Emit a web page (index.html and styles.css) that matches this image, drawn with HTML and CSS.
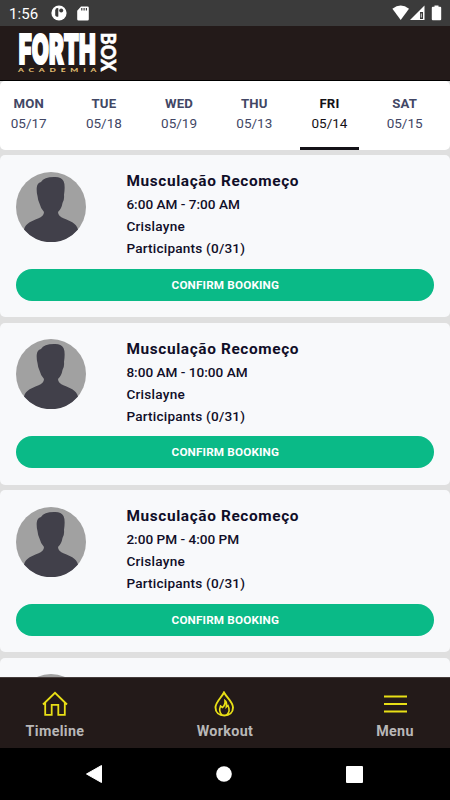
FILE: index.html
```html
<!DOCTYPE html>
<html lang="en">
<head>
<meta charset="utf-8">
<title>Forth Box</title>
<link rel="stylesheet" href="styles.css">
</head>
<body>
<div class="status">
  <span class="clock">1:56</span>
  <svg class="app" width="16" height="16" viewBox="0 0 16 16"><circle cx="8" cy="8" r="7.600" fill="#fff"/><path d="M7.300 3.200A2.600 2.600 0 0 0 4.200 5.500V10a2 2 0 0 0 3.100 1.400z" fill="#3b3b3b"/><circle cx="10.200" cy="5.500" r="2" fill="#3b3b3b"/></svg>
  <svg class="sd" width="12" height="15" viewBox="0 0 12 15"><path d="M4 .5h6.500a1.300 1.300 0 0 1 1.300 1.300v11.400a1.300 1.300 0 0 1-1.300 1.300h-9A1.300 1.300 0 0 1 .2 13.200V4.800z" fill="#fff"/><path d="M4.800 2v2.500M7.100 2v2.500M9.400 2v2.500" stroke="#3b3b3b" stroke-width="1.200"/></svg>
  <svg class="signals" width="50" height="16" viewBox="0 0 50 16"><path d="M.4 3.700Q8.700-2.700 17 3.700L8.700 15z" fill="#fff"/><path d="M18 15L32.500.5V15z" fill="#fff"/><path d="M28 7h3v7h-3z" fill="#3b3b3b"/><path d="M29.300 8.500v4" stroke="#fff" stroke-width=".8"/><path d="M42.500.5h4v1.200h1.700q1 0 1 1v11.500q0 1-1 1h-7.400q-1 0-1-1V2.700q0-1 1-1h1.700z" fill="#fff"/></svg>
</div>
<header class="header">
  <svg class="logo" width="102" height="44" viewBox="0 0 102 44">
    <text class="forth" transform="translate(1.800 32.500) scale(.68 1.170)" textLength="113" lengthAdjust="spacingAndGlyphs">FORTH</text>
    <text class="academia" transform="translate(1 41) scale(1.400 1)" textLength="56">ACADEMIA</text>
    <text class="box" transform="translate(84 1.500) rotate(90)" textLength="39" lengthAdjust="spacingAndGlyphs">BOX</text>
  </svg>
</header>
<main class="content">
  <nav class="days">
    <div class="day"><b>MON</b><span>05/17</span></div>
    <div class="day"><b>TUE</b><span>05/18</span></div>
    <div class="day"><b>WED</b><span>05/19</span></div>
    <div class="day"><b>THU</b><span>05/13</span></div>
    <div class="day active"><b>FRI</b><span>05/14</span></div>
    <div class="day"><b>SAT</b><span>05/15</span></div>
  </nav>
  <svg width="0" height="0" class="defs"><symbol id="person" viewBox="0 0 70 70"><circle cx="35" cy="35" r="35" fill="#a1a1a1"/><path d="M8 57.500C9.500 51 17 48.500 22 46.500Q28 44 28 40Q24.500 36 23.500 31.500Q22 29 21.500 24Q20.500 21 20.700 16Q21 11 25 10Q28 5 38 5Q45 4.500 47.500 9Q49.500 13 48 23Q48.500 28 46.500 31Q45.500 37 42 40Q42 44 48 46.500C53 48.500 60.500 51 62 57.500A35 35 0 0 1 8 57.500Z" fill="#41404a"/></symbol></svg>
  <article class="card">
    <div class="info"><svg class="avatar"><use href="#person"/></svg><div class="details"><h2>Musculação Recomeço</h2><p class="time">6:00 AM - 7:00 AM</p><p class="coach">Crislayne</p><p class="people">Participants (0/31)</p></div></div>
    <button class="book">CONFIRM BOOKING</button>
  </article>
  <article class="card">
    <div class="info"><svg class="avatar"><use href="#person"/></svg><div class="details"><h2>Musculação Recomeço</h2><p class="time">8:00 AM - 10:00 AM</p><p class="coach">Crislayne</p><p class="people">Participants (0/31)</p></div></div>
    <button class="book">CONFIRM BOOKING</button>
  </article>
  <article class="card">
    <div class="info"><svg class="avatar"><use href="#person"/></svg><div class="details"><h2>Musculação Recomeço</h2><p class="time">2:00 PM - 4:00 PM</p><p class="coach">Crislayne</p><p class="people">Participants (0/31)</p></div></div>
    <button class="book">CONFIRM BOOKING</button>
  </article>
  <article class="card">
    <div class="info"><svg class="avatar"><use href="#person"/></svg></div>
  </article>
</main>
<nav class="tabs">
  <div class="tab"><svg width="26" height="26" viewBox="0 0 26 26"><path d="M1 13.500L13 1.800l12 11.700M3.200 12v11.800h6.500v-10h6.600v10h6.500V12" fill="none" stroke="#e8df16" stroke-width="1.800"/></svg><span>Timeline</span></div>
  <div class="tab"><svg width="26" height="26" viewBox="0 0 26 26"><path d="M12 1.500C10 6 3.500 11 3.500 16.500C3.500 21.500 7 24.500 12.300 24.500S21 21.500 21 16.500C21 11 15 7 12 1.500Z" fill="none" stroke="#e8df16" stroke-width="1.900"/><path d="M10 24C7.500 21.500 7.300 18 8.500 15l2 1.500q3-2.500 2.500-7c2.500 2 1.500 4.500 1.300 6.500l1.700-1.500c2 4 1.500 7-1.500 9.500" fill="none" stroke="#e8df16" stroke-width="1.600"/></svg><span>Workout</span></div>
  <div class="tab"><svg width="26" height="26" viewBox="0 0 26 26"><path d="M2 5.500h23M2 13h23M2 20.500h23" stroke="#e8df16" stroke-width="2"/></svg><span>Menu</span></div>
</nav>
<footer class="system">
  <svg width="16" height="18" viewBox="0 0 16 18"><path d="M.5 9L15.500.5v17z" fill="#fff" stroke="#fff" stroke-linejoin="round"/></svg>
  <svg width="16" height="16" viewBox="0 0 16 16"><circle cx="8" cy="8" r="7.800" fill="#fff"/></svg>
  <svg width="17" height="17" viewBox="0 0 17 17"><rect width="17" height="17" rx="1" fill="#fff"/></svg>
</footer>
</body>
</html>
```
FILE: styles.css
```css
* { box-sizing: border-box; }
body { margin: 0; width: 450px; height: 800px; overflow: hidden; display: flex; flex-direction: column; font-family: Roboto, "Open Sans", sans-serif; color: #100e28; background: #000; }
.status { height: 26px; flex: none; background: #3b3b3b; color: #fff; display: flex; align-items: center; padding: 0 8px 0 9px; }
.clock { font-size: 15px; line-height: 26px; width: 42px; letter-spacing: .1px; padding-top: 1px; }
.sd { margin-left: 10px; }
.signals { margin-left: auto; }
.header { height: 55px; flex: none; background: #231a19; border-bottom: 1px solid #000; padding: 5px 0 0 17px; }
.logo { display: block; overflow: visible; }
.forth { font: 900 35px Inter, sans-serif; fill: #fff; stroke: #fff; stroke-width: 1.800px; }
.academia { font: 900 6px Lato, sans-serif; fill: #e0bd70; }
.box { font: 900 20px Lato, sans-serif; fill: #fff; stroke: #fff; stroke-width: .5px; }
.content { height: 596px; flex: none; overflow: hidden; background: #dfdfdf; }
.days { display: grid; grid-template-columns: repeat(6, 75.200px); height: 69px; background: #fff; border-radius: 5px; padding: 13px 0 0; margin-bottom: 5.300px; overflow: hidden; }
.day { width: 59px; margin-left: -.8px; display: flex; flex-direction: column; align-items: center; color: #424765; font-size: 13.500px; line-height: 19.500px; height: 56px; white-space: nowrap; }
.day b { font-size: 13.200px; font-weight: 700; letter-spacing: .2px; }
.day.active { color: #141217; border-bottom: 3.500px solid #141217; }
.defs { display: block; }
.card { height: 162px; margin-bottom: 5.500px; background: #f8f9fb; border-radius: 5px; padding: 16.600px 16px 0 16.400px; }
.info { display: flex; height: 97px; gap: 40px; }
.avatar { width: 70px; height: 70px; display: block; flex: none; }
.details { font-size: 13.600px; font-weight: 500; line-height: 22px; white-space: nowrap; }
.coach { letter-spacing: .25px; }
.people { letter-spacing: .2px; }
h2, p { margin: 0; }
h2 { font-size: 15.400px; font-weight: 700; line-height: 20px; margin: -.8px 0 2px; letter-spacing: .62px; }
.book { display: block; width: 418px; height: 32px; border: 0; border-radius: 16px; background: #0aba87; color: #fff; padding: 0; font: 700 11.700px/32px Roboto, sans-serif; letter-spacing: .17px; }
.tabs { height: 71px; flex: none; background: #231a19; border-top: 1px solid #463d3c; display: flex; justify-content: space-between; padding: 13px 25px 0; }
.tab { width: 60px; display: flex; flex-direction: column; align-items: center; color: #b8b7b7; font-size: 14.300px; font-weight: 700; line-height: 18px; letter-spacing: .35px; }
.tab svg { margin-bottom: 5px; }
.system { height: 52px; flex: none; background: #000; display: flex; align-items: center; justify-content: space-between; padding: 0 87px 0 86px; }
```
